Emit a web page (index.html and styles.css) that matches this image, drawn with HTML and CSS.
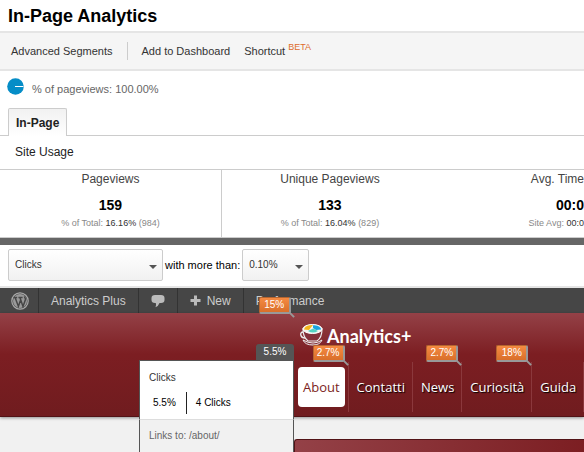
FILE: index.html
```html
<!DOCTYPE html>
<html lang="en">
<head>
    <meta charset="UTF-8">
    <meta name="viewport" content="width=device-width, initial-scale=1.0">
    <title>In-Page Analytics</title>
    <link rel="stylesheet" href="styles.css">
</head>
<body>

<h1 class="title">In-Page Analytics</h1>

<nav class="toolbar">
    <a href="#">Advanced Segments</a>
    <span class="divider"></span>
    <a href="#">Add to Dashboard</a>
    <a href="#">Shortcut <sup>BETA</sup></a>
</nav>

<div class="share">
    <svg width="17" height="17" viewBox="0 0 17 17">
        <circle cx="8.5" cy="8.5" r="8.3" fill="#058dc7"/>
        <path d="M8 8.5h8.5" stroke="#fff" stroke-width="1"/>
    </svg>
    <span>% of pageviews: 100.00%</span>
</div>

<div class="tabs">
    <button class="tab" type="button">In-Page</button>
</div>

<h2 class="subtitle">Site Usage</h2>

<section class="metrics">
    <div class="metric">
        <h3>Pageviews</h3>
        <strong class="value">159</strong>
        <p>% of Total: <b>16.16%</b> (984)</p>
    </div>
    <div class="metric">
        <h3>Unique Pageviews</h3>
        <strong class="value">133</strong>
        <p>% of Total: <b>16.04%</b> (829)</p>
    </div>
    <div class="metric last">
        <h3>Avg. Time</h3>
        <strong class="value">00:0</strong>
        <p>Site Avg: <b>00:0</b></p>
    </div>
</section>

<form class="filter">
    <span class="select wide">
        <select aria-label="Metric"><option>Clicks</option></select>
    </span>
    <label for="threshold">with more than:</label>
    <span class="select">
        <select id="threshold"><option>0.10%</option></select>
    </span>
</form>

<main class="site">
    <nav class="adminbar">
        <a class="wp" href="#" aria-label="WordPress">
            <svg width="18" height="18" viewBox="0 0 18 18">
                <circle cx="9" cy="9" r="8.2" fill="none" stroke="#aaa" stroke-width="1.2"/>
                <circle cx="9" cy="9" r="7" fill="#999"/>
                <path d="M2.6 5.6h3.6M7.4 5.6h4.2M4.2 5.8l3.2 8.6 2-5.8M9 5.8l3 8.6 2.4-6.6c.3-1.4-.8-2.2-.9-3.4" fill="none" stroke="#464646" stroke-width="1.5"/>
            </svg>
        </a>
        <a href="#">Analytics Plus</a>
        <a href="#" aria-label="Comments">
            <svg width="14" height="14" viewBox="0 0 14 14">
                <path d="M4 1h6q3.5 0 3.5 3v2q0 3-3.5 3H8.5Q7.5 12 4.5 13.3 5.5 11 4.8 9H4Q.5 9 .5 6V4Q.5 1 4 1z" fill="#bbb"/>
            </svg>
        </a>
        <a href="#">
            <svg class="plus" width="11" height="11" viewBox="0 0 11 11">
                <path d="M5.5 .5v10M.5 5.5h10" stroke="#bbb" stroke-width="3"/>
            </svg>
            New
        </a>
        <a class="performance" href="#">Performance <span class="badge">15%</span></a>
    </nav>

    <header class="header">
        <div class="brand">
            <svg width="24" height="24" viewBox="0 0 24 24">
                <path d="M3 6q9 5 19 0c0 6-2 10-5 12H8C4 15 3 11 3 6z" fill="#84313a" stroke="#eee" stroke-width="1.2"/>
                <path d="M3 9C-.5 9 0 15 5 15" fill="none" stroke="#eee" stroke-width="1.3"/>
                <ellipse cx="12.5" cy="6" rx="9.5" ry="4.5" fill="#f5f5ef" stroke="#fff"/>
                <path d="M4 6.5C5 3 8 2 13 2L9 7z" fill="#f5b51d"/>
                <path d="M13 2.2c4 0 8 1.5 8 4.3l-5 .5-3-2z" fill="#1aa4df"/>
                <path d="M8 8l5-2.5L18 8q-5 3-10 0z" fill="#54d3c2"/>
                <path d="M3 17q2 5 10 5 7 0 9-5-4 3-9 3t-10-3z" fill="#84313a" stroke="#eee"/>
            </svg>
            <span>Analytics+</span>
        </div>
        <nav class="menu">
            <a class="current" href="#"><span>About</span><span class="badge">2.7%</span></a>
            <a href="#">Contatti</a>
            <a href="#">News<span class="badge">2.7%</span></a>
            <a href="#">Curiosità<span class="badge">18%</span></a>
            <a href="#">Guida</a>
        </nav>
    </header>

    <div class="hero"></div>

    <aside class="popup">
        <span class="popup-tab">5.5%</span>
        <div class="popup-body">
            <h4>Clicks</h4>
            <div class="numbers"><span>5.5%</span><span>4 Clicks</span></div>
        </div>
        <p class="popup-foot">Links to: /about/</p>
    </aside>
</main>

</body>
</html>
```

FILE: styles.css
```css
*{
    box-sizing: border-box;
}

body{
    margin: 0;
    min-height: 100vh;
    display: flex;
    flex-direction: column;
    background-color: white;
    color: #222;
    font-family: "Liberation Sans", Arial, sans-serif;
    font-size: 11px;
}

h1, h2, h3, h4, p{
    margin: 0;
    font-weight: normal;
}

a{
    color: inherit;
    text-decoration: none;
}

svg{
    display: block;
}

.title{
    padding: 4px 8px 3px;
    font-size: 18px;
    line-height: 24px;
    font-weight: bold;
    color: black;
}

.toolbar{
    display: flex;
    align-items: center;
    height: 40px;
    padding: 0 11px;
    border-top: 2px solid #e5e5e5;
    border-bottom: 2px solid #e5e5e5;
    background-color: #f5f5f5;
    color: #333;
    gap: 14px;
    white-space: nowrap;
}

.toolbar sup{
    font-size: 9px;
    line-height: 1px;
    color: #dd6b2b;
}

.divider{
    width: 1px;
    height: 18px;
    background-color: #ccc;
}

.share{
    display: flex;
    gap: 8px;
    padding: 7px;
    height: 37px;
    color: #666;
    line-height: 22px;
}

.tabs{
    display: flex;
    height: 28px;
    padding-left: 8px;
    border-bottom: 1px solid #ccc;
}

.tab{
    height: 28px;
    padding: 0 7px;
    border: 1px solid #ccc;
    border-bottom: 0;
    border-radius: 2px 2px 0 0;
    background: linear-gradient(#f1f1f1, white);
    color: #222;
    font: bold 12px "Liberation Sans", Arial, sans-serif;
}

.subtitle{
    padding: 0 15px;
    font-size: 12px;
    line-height: 33px;
}

.metrics{
    display: grid;
    grid-template-columns: 38% 37% 25%;
    border-top: 1px solid #ccc;
    border-bottom: 7px solid #666;
    text-align: center;
    white-space: nowrap;
}

.metric{
    height: 68px;
    border-bottom: 1px solid #ccc;
}

.metric:first-child{
    border-right: 1px solid #ccc;
}

.metric h3{
    font-size: 12px;
    line-height: 18px;
    color: #444;
}

.metric .value{
    display: block;
    padding-top: 7px;
    font-size: 14px;
    line-height: 20px;
    color: black;
}

.metric p{
    font-size: 9px;
    line-height: 16px;
    color: #888;
}

.metric b{
    font-weight: normal;
    color: #333;
}

.metric.last{
    text-align: right;
}

.filter{
    display: flex;
    align-items: center;
    gap: 2px;
    padding: 4px 8px 5px;
    border-bottom: 2px solid #e5e5e5;
    color: black;
}

.select{
    position: relative;
    width: 67px;
}

.select.wide{
    width: 155px;
}

.select::after{
    content: '';
    position: absolute;
    right: 6px;
    top: 16px;
    border: 4px solid transparent;
    border-top-color: #555;
    border-bottom: 0;
    pointer-events: none;
}

.select select{
    display: block;
    appearance: none;
    width: 100%;
    height: 32px;
    padding: 0 6px 2px;
    border: 1px solid #ccc;
    border-radius: 2px;
    background: linear-gradient(white, #f1f1f1);
    color: #333;
    font: 10px "Liberation Sans", Arial, sans-serif;
}

.site{
    position: relative;
    flex: 1;
    display: flex;
    flex-direction: column;
    background-color: #f1f1f1;
}

.adminbar{
    display: flex;
    height: 25px;
    background-color: #464646;
    color: #ccc;
    font-size: 12px;
}

.adminbar a{
    display: flex;
    align-items: center;
    gap: 6px;
    padding: 0 12px;
    border-right: 1px solid #333;
    white-space: nowrap;
}

.adminbar .wp{
    padding: 0 9px 0 11px;
}

.adminbar .performance{
    position: relative;
    border-right: 0;
}

.badge{
    position: absolute;
    right: 3px;
    top: -17px;
    width: 32px;
    height: 17px;
    border: 1px solid #b5652f;
    border-right: 2px solid #999;
    border-bottom: 2px solid #999;
    border-radius: 2px;
    background: linear-gradient(#f58a42, #d96f2a);
    color: white;
    font: 10px/14px "Liberation Sans", Arial, sans-serif;
    text-align: center;
    text-shadow: none;
}

.badge::after{
    content: '';
    position: absolute;
    right: -6px;
    bottom: -4px;
    width: 6px;
    height: 2px;
    background-color: #999;
    transform: rotate(45deg);
}

.adminbar .badge{
    left: 15px;
    top: 9px;
}

.header{
    height: 104px;
    padding-left: 298px;
    border-bottom: 1px solid #521316;
    background: linear-gradient(#944147, #7c1e22 40%, #701c1f);
    box-shadow: 0 1px 3px rgba(0, 0, 0, 0.4);
}

.brand{
    display: flex;
    align-items: flex-start;
    gap: 3px;
    height: 49px;
    padding: 10px 0 0 2px;
    color: white;
    font: bold 18px/26px Lato, sans-serif;
}

.menu{
    display: flex;
    height: 50px;
    color: white;
    font: 13px/50px "Open Sans", sans-serif;
    text-shadow: 1px 1px 1px black;
}

.menu a{
    position: relative;
    padding: 0 7px 0 8px;
    border-right: 1px solid #8b383c;
}

.menu .current{
    padding: 5px 3px 5px 0;
    color: #7c1e22;
    text-shadow: none;
    line-height: 40px;
}

.current span:first-child{
    display: block;
    padding: 0 5px;
    border-radius: 4px;
    background-color: white;
}

.hero{
    flex: 1;
    min-height: 13px;
    margin: 22px 0 0 294px;
    border: 1px solid #521316;
    border-right: 0;
    border-bottom: 0;
    border-radius: 3px 0 0 0;
    background: linear-gradient(100deg, #944147, #7c1e22);
}

.popup{
    position: absolute;
    left: 139px;
    top: 56px;
    bottom: 0;
    width: 155px;
    display: flex;
    flex-direction: column;
    font-size: 10px;
}

.popup-tab{
    align-self: flex-end;
    width: 38px;
    border-radius: 3px 3px 0 0;
    background-color: #555;
    color: white;
    line-height: 16px;
    text-align: center;
}

.popup-body{
    padding: 9px;
    height: 59px;
    border: 1px solid #555;
    border-bottom: 0;
    background-color: white;
    color: #333;
}

.popup h4{
    font-size: 10px;
    line-height: 16px;
}

.numbers{
    display: flex;
    padding: 6px 4px;
    color: black;
    line-height: 22px;
}

.numbers span:last-child{
    margin-left: 10px;
    padding-left: 9px;
    border-left: 1px solid #222;
}

.popup-foot{
    flex: 1;
    padding: 8px 9px 0;
    border: 1px solid #555;
    border-top-color: #ddd;
    border-bottom: 0;
    background-color: #f1f1f1;
    color: #666;
    line-height: 16px;
}
```
